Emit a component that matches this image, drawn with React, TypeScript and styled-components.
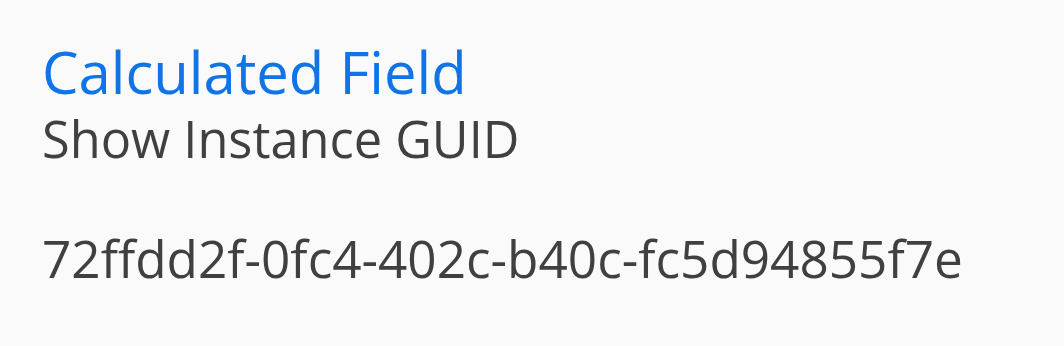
import styled, { createGlobalStyle } from 'styled-components';

const GlobalStyle = createGlobalStyle`
  html, body {
    margin: 0;
    padding: 0;
    background: #fafafa;
  }
  body {
    font-family: 'Open Sans', 'Noto Sans', sans-serif;
  }
`;

const Page = styled.div`
  width: 1064px;
  height: 346px;
  box-sizing: border-box;
  padding: 42px 42px 0;
  background: #fafafa;
`;

const Header = styled.div`
  display: flex;
  flex-direction: column;
  gap: 7px;
`;

const Title = styled.div`
  font-size: 58px;
  line-height: 60px;
  color: #0e74e8;
`;

const Subtitle = styled.div`
  font-size: 50.5px;
  line-height: 60px;
  color: #404040;
`;

const Value = styled.div`
  margin-top: 59px;
  font-size: 51.3px;
  line-height: 60px;
  color: #404040;
`;

const App = () => (
  <>
    <GlobalStyle />
    <Page>
      <Header>
        <Title>Calculated Field</Title>
        <Subtitle>Show Instance GUID</Subtitle>
      </Header>
      <Value>72ffdd2f-0fc4-402c-b40c-fc5d94855f7e</Value>
    </Page>
  </>
);

export default App;
